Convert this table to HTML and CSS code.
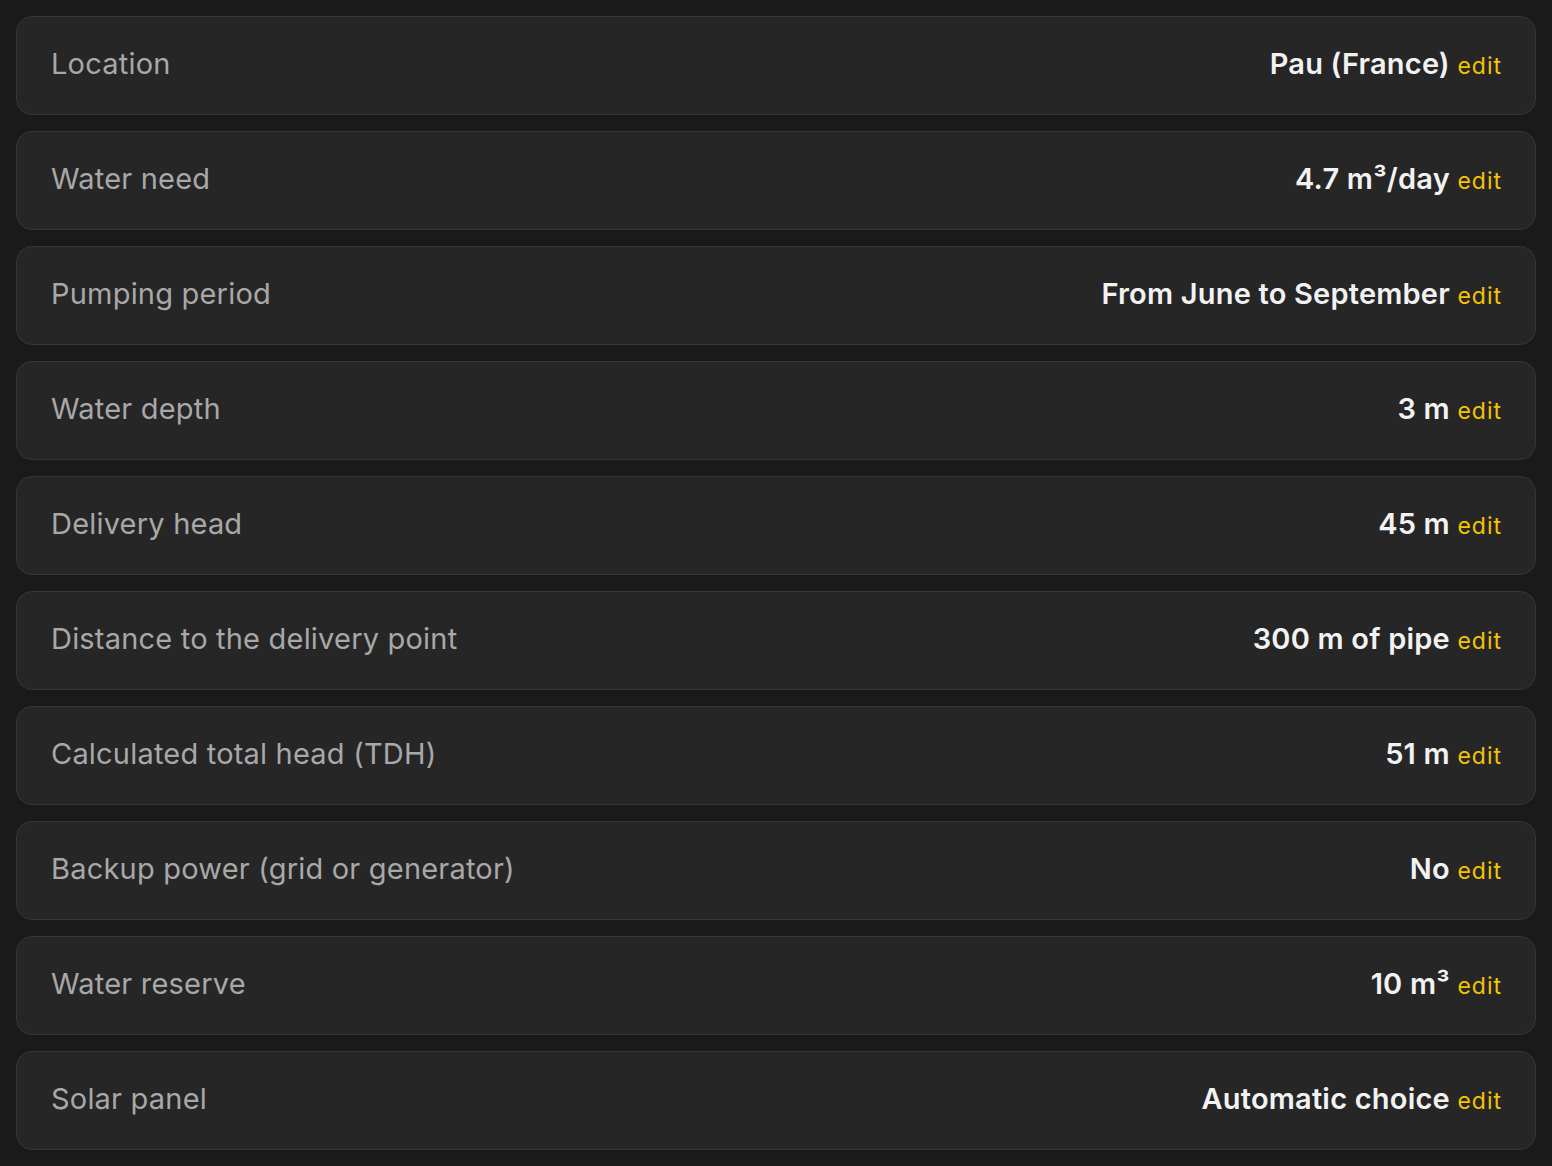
FILE: index.html
```html
<!DOCTYPE html>
<html lang="en">
<head>
    <meta charset="UTF-8">
    <title>Pump settings</title>
    <link rel="stylesheet" href="styles.css">
</head>
<body>
    <div class="lista">
        <div class="fila">
            <span class="etiqueta">Location</span>
            <span class="valor">Pau (France) <a class="editar" href="#">edit</a></span>
        </div>
        <div class="fila">
            <span class="etiqueta">Water need</span>
            <span class="valor">4.7 m³/day <a class="editar" href="#">edit</a></span>
        </div>
        <div class="fila">
            <span class="etiqueta">Pumping period</span>
            <span class="valor">From June to September <a class="editar" href="#">edit</a></span>
        </div>
        <div class="fila">
            <span class="etiqueta">Water depth</span>
            <span class="valor">3 m <a class="editar" href="#">edit</a></span>
        </div>
        <div class="fila">
            <span class="etiqueta">Delivery head</span>
            <span class="valor">45 m <a class="editar" href="#">edit</a></span>
        </div>
        <div class="fila">
            <span class="etiqueta">Distance to the delivery point</span>
            <span class="valor">300 m of pipe <a class="editar" href="#">edit</a></span>
        </div>
        <div class="fila">
            <span class="etiqueta">Calculated total head (TDH)</span>
            <span class="valor">51 m <a class="editar" href="#">edit</a></span>
        </div>
        <div class="fila">
            <span class="etiqueta">Backup power (grid or generator)</span>
            <span class="valor">No <a class="editar" href="#">edit</a></span>
        </div>
        <div class="fila">
            <span class="etiqueta">Water reserve</span>
            <span class="valor">10 m³ <a class="editar" href="#">edit</a></span>
        </div>
        <div class="fila">
            <span class="etiqueta">Solar panel</span>
            <span class="valor">Automatic choice <a class="editar" href="#">edit</a></span>
        </div>
    </div>
</body>
</html>
```

FILE: styles.css
```css
body {
    margin: 0;
    background-color: #1a1a1a;
    font-family: Inter, "Noto Sans", sans-serif;
}

.lista {
    display: flex;
    flex-direction: column;
    gap: 16px;
    padding: 16px;
}

.fila {
    display: flex;
    justify-content: space-between;
    align-items: center;
    height: 99px;
    box-sizing: border-box;
    padding: 0 33px 4px 34px;
    background-color: #262626;
    border: 1px solid #363636;
    border-radius: 16px;
}

.etiqueta {
    color: #a8a8a8;
    font-size: 29px;
    letter-spacing: 0.2px;
}

.valor {
    color: #f2f2f2;
    font-size: 29px;
    font-weight: 600;
    letter-spacing: 0.2px;
}

.editar {
    color: #f5c400;
    font-size: 23px;
    font-weight: 400;
    letter-spacing: 1px;
    text-decoration: none;
}
```
